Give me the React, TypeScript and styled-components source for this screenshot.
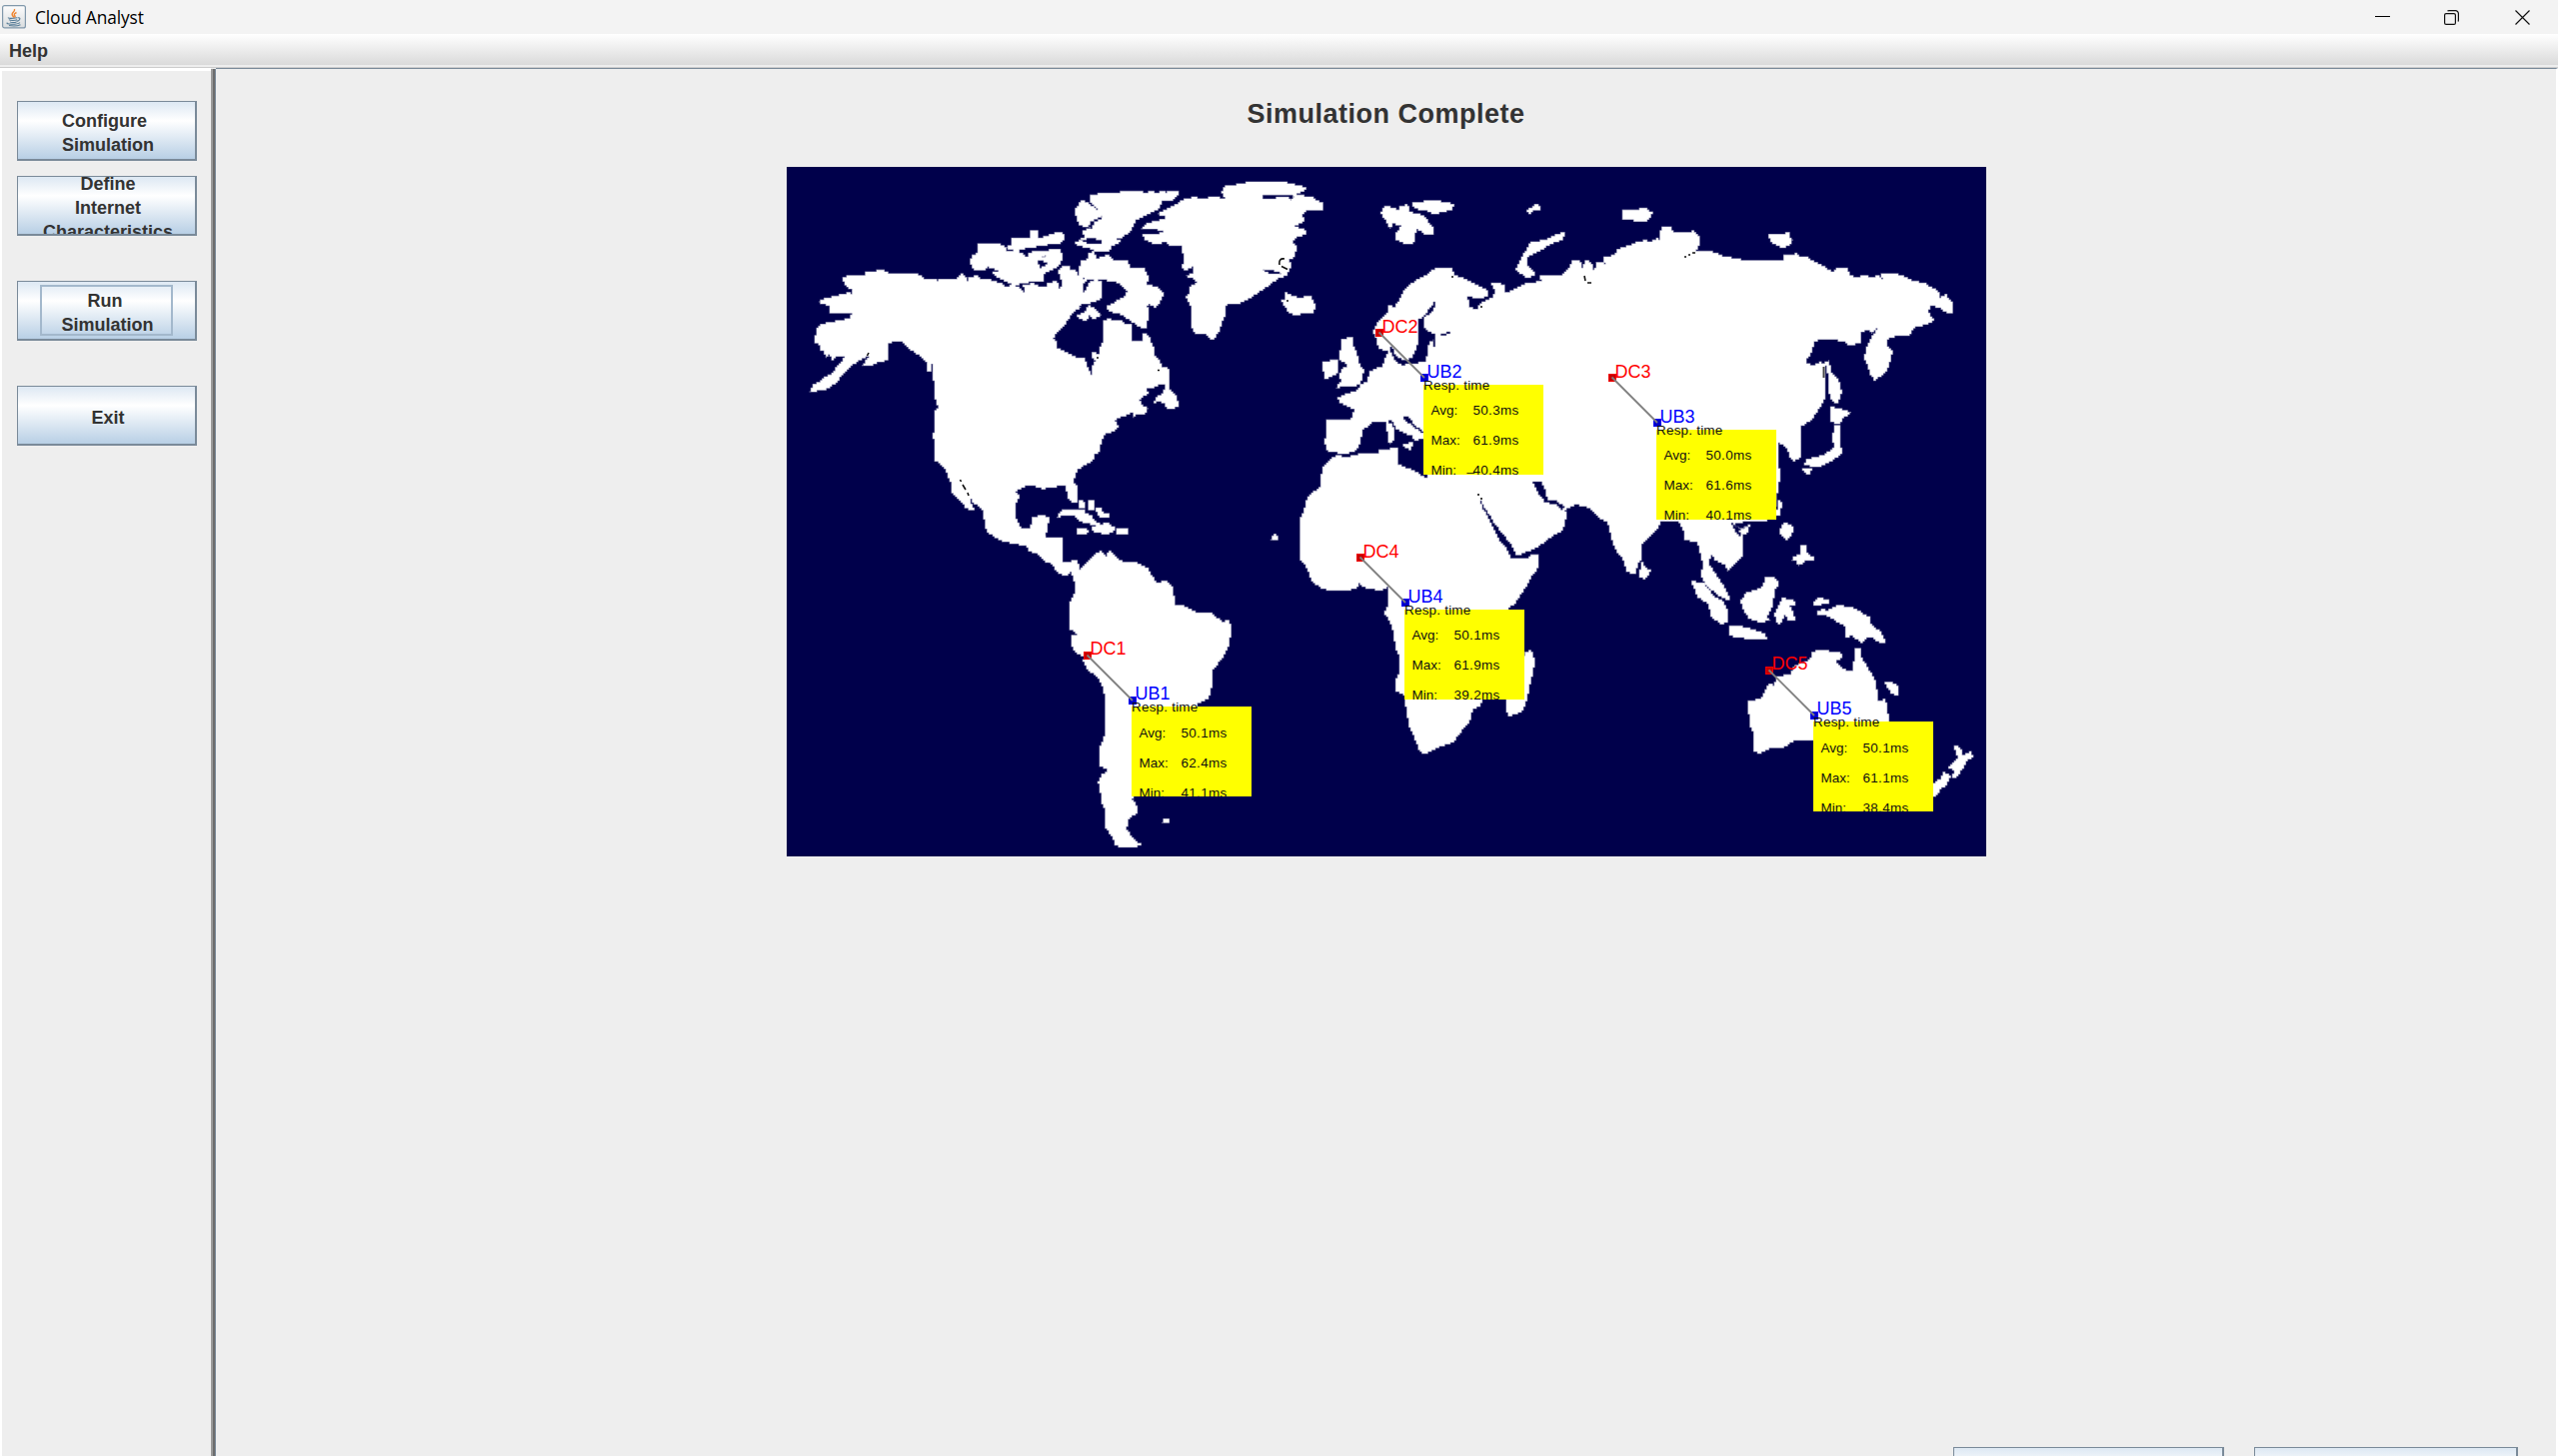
import React from "react";
import styled, { createGlobalStyle, css } from "styled-components";

const Global = createGlobalStyle`
  * { box-sizing: border-box; }
  body { margin: 0; overflow: hidden; background: #eeeeee; font-family: "Liberation Sans", Arial, sans-serif; }
`;

const Frame = styled.div`
  display: flex;
  flex-direction: column;
  width: 100vw;
  height: 100vh;
  overflow: hidden;
  background: #eeeeee;
`;

const TitleBar = styled.header`
  display: flex;
  align-items: center;
  flex: 0 0 34px;
  height: 34px;
  padding: 0 28px 0 2px;
  background: #f3f3f3;
`;

const WindowName = styled.span`
  flex: 1;
  height: 34px;
  padding-left: 9px;
  font: 17.3px/36px "Open Sans", "Noto Sans", sans-serif;
  letter-spacing: -0.08px;
  color: #000;
`;

const Controls = styled.div`
  display: flex;
  gap: 56px;
  height: 15px;
  svg { display: block; }
  svg:first-child { margin-right: -2px; }
`;

const MenuBar = styled.nav`
  flex: 0 0 34px;
  height: 34px;
  min-height: 0;
  overflow: hidden;
  padding-left: 9px;
  border-bottom: 1px solid #cccccc;
  background: linear-gradient(#ffffff, #dadada 31px, #eeeeee 31px);
`;

const MenuItem = styled.span`
  display: block;
  height: 33px;
  font-size: 18px;
  font-weight: bold;
  line-height: 34px;
  color: #333333;
`;

const Body = styled.div`
  display: flex;
  flex: 1;
  min-height: 0;
`;

const Sidebar = styled.aside`
  display: flex;
  flex-direction: column;
  flex: 0 0 211px;
  padding: 30px 0 0 15px;
  border-left: 2px solid #ffffff;
  border-top: 3px solid #ffffff;
`;

const Divider = styled.div`
  flex: 0 0 5px;
  margin-top: 1px;
  border-left: 2px solid #999999;
  background: linear-gradient(90deg, #6c6c6c 2px, #7a8a99 2px);
`;

const steel = css`
  border: solid #7a8a99;
  border-width: 1px 2px 2px 1px;
  background: linear-gradient(#dde8f3, #ffffff 33%, #b8cfe5);
`;

const SideButton = styled.button<{ $gap?: number }>`
  ${steel}
  display: flex;
  align-items: center;
  justify-content: center;
  flex: none;
  width: 180px;
  height: 60px;
  margin: 0 0 ${(p) => p.$gap ?? 0}px;
  padding: 0 0 0 2px;
  overflow: hidden;
  font: bold 18px/24px "Liberation Sans", Arial, sans-serif;
  color: #333333;
  text-align: center;
  white-space: pre;
`;

const Focus = styled.span`
  display: flex;
  align-items: center;
  justify-content: center;
  width: 133px;
  height: 51px;
  margin-right: 3px;
  padding-left: 2px;
  border: 2px solid #a3b8cc;
`;

const Caption = styled.span<{ $left?: boolean }>`
  margin-bottom: -5px;
  padding-left: 1px;
  text-align: ${(p) => (p.$left ? "left" : "center")};
`;

const Content = styled.main`
  display: flex;
  flex-direction: column;
  align-items: center;
  flex: 1;
  border-top: 1px solid #7a8a99;
  border-right: 2px solid #ffffff;
`;

const Heading = styled.h1`
  margin: 30px 0 37px;
  font-size: 27px;
  line-height: 31px;
  letter-spacing: 0.5px;
  color: #333333;
`;

const MapArea = styled.section`
  position: relative;
  width: 1200px;
  height: 690px;
  background: #00004b;
  svg { display: block; }
`;

const Actions = styled.footer`
  display: flex;
  align-self: flex-end;
  gap: 30px;
  height: 9px;
  margin: auto 38px 0 0;
  overflow: hidden;
`;

const ActionButton = styled.button<{ $w: number }>`
  ${steel}
  flex: none;
  width: ${(p) => p.$w}px;
  height: 60px;
`;

const Pin = styled.div<{ $x: number; $y: number; $c: string; $fill: string }>`
  position: absolute;
  left: ${(p) => p.$x}px;
  top: ${(p) => p.$y}px;
  width: 8px;
  height: 8px;
  border: 1px solid ${(p) => p.$c};
  background: ${(p) => p.$fill};
`;

const PinName = styled.span<{ $x: number; $y: number; $c: string }>`
  position: absolute;
  left: ${(p) => p.$x}px;
  top: ${(p) => p.$y}px;
  font-size: 18px;
  line-height: 20px;
  color: ${(p) => p.$c};
`;

const Link = styled.svg<{ $x: number; $y: number }>`
  position: absolute;
  left: ${(p) => p.$x}px;
  top: ${(p) => p.$y}px;
`;

const Card = styled.div<{ $x: number; $y: number; $drop: number }>`
  position: absolute;
  left: ${(p) => p.$x}px;
  top: ${(p) => p.$y}px;
  width: 120px;
  height: 90px;
  padding: ${(p) => 11 + p.$drop}px 0 0 8px;
  overflow: hidden;
  background: #ffff00;
  font-size: 13.5px;
  line-height: 30px;
  color: #111111;
`;

const CardTitle = styled.span<{ $x: number; $y: number }>`
  position: absolute;
  left: ${(p) => p.$x}px;
  top: ${(p) => p.$y}px;
  font-size: 13.5px;
  line-height: 16px;
  letter-spacing: 0.2px;
  color: #111111;
  white-space: nowrap;
`;

const Row = styled.div`
  display: grid;
  grid-template-columns: 42px auto;
  height: 30px;
`;

const Value = styled.span`
  position: relative;
  letter-spacing: 0.3px;
`;

const Stray = styled.span`
  position: absolute;
  left: -6px;
  top: -4px;
`;

type Site = {
  id: number;
  x: number;
  y: number;
  drop: number;
  avg: string;
  max: string;
  min: string;
  stray?: boolean;
};

const sites: Site[] = [
  { id: 1, x: 297, y: 485, drop: 1, avg: "50.1ms", max: "62.4ms", min: "41.1ms" },
  { id: 2, x: 589, y: 162, drop: 0, avg: "50.3ms", max: "61.9ms", min: "40.4ms", stray: true },
  { id: 3, x: 822, y: 207, drop: 0, avg: "50.0ms", max: "61.6ms", min: "40.1ms" },
  { id: 4, x: 570, y: 387, drop: 0, avg: "50.1ms", max: "61.9ms", min: "39.2ms" },
  { id: 5, x: 979, y: 500, drop: 1, avg: "50.1ms", max: "61.1ms", min: "38.4ms" },
];

const SiteMark = ({ s }: { s: Site }) => (
  <>
    <Pin $x={s.x} $y={s.y} $c="#f00000" $fill="#c80000" />
    <Pin $x={s.x + 45} $y={s.y + 45} $c="#0000f0" $fill="#0000c8" />
    <Card $x={s.x + 48} $y={s.y + 56 - s.drop} $drop={s.drop}>
      <Row><span>Avg:</span><Value>{s.avg}</Value></Row>
      <Row><span>Max:</span><Value>{s.max}</Value></Row>
      <Row><span>Min:</span><Value>{s.stray && <Stray>_</Stray>}{s.min}</Value></Row>
    </Card>
    <CardTitle $x={s.x + 48.5} $y={s.y + 49 - s.drop}>Resp. time</CardTitle>
    <Link $x={s.x} $y={s.y} width="54" height="54">
      <path d="M3.5 3.5L49 49" stroke="#808080" strokeWidth="1.8" />
    </Link>
    <PinName $x={s.x + 7} $y={s.y - 12 - s.drop} $c="#ff0000">DC{s.id}</PinName>
    <PinName $x={s.x + 52} $y={s.y + 33 - s.drop} $c="#0000ff">UB{s.id}</PinName>
  </>
);

const americaNorth = [
  "M188,355L205,350 250,345 258,338 282,334 292,329 308,332 325,341 410,343 420,350 432,356 466,357 470,366 474,357 500,357 520,360 532,352 545,341 556,350 560,364 568,362 568,352 590,346 600,358 625,360 640,366 672,374 676,380 700,375 705,380 722,385 728,402 735,384 730,375 742,378 760,368 772,380 800,382 804,372 830,365 835,388 842,388 847,368 845,345 838,330 846,320 866,320 868,330 885,332 895,345 905,352 922,362 912,372 912,396 922,385 928,368 945,358 968,362 966,415 945,424 920,432 895,436 905,445 888,456 872,470 865,485 852,500 830,520 820,540 830,548 832,567 850,572 870,585 890,592 918,594 922,625 930,645 937,645 940,615 950,602 962,585 960,560 970,540 970,485 985,478 1005,485 1020,482 1032,495 1055,495 1055,543 1090,543 1092,520 1108,530 1115,550 1125,570 1123,590 1138,605 1145,625 1160,625 1168,635 1170,690 1185,705 1190,720 1194,742 1175,745 1160,740 1155,728 1140,725 1125,732 1130,715 1150,695 1160,672 1145,672 1120,682 1098,685 1105,700 1085,712 1080,725 1090,740 1108,748 1095,762 1075,765 1062,775 1060,757 1035,768 1015,772 1005,788 1018,802 1005,815 985,820 970,830 968,850 958,858 960,875 942,885 945,900 935,910 915,918 895,935 885,945 880,970 892,985 892,1030 880,1028 862,1012 858,980 805,982 800,990 780,985 765,978 740,980 715,992 708,1000 716,1010 708,1035 708,1080 722,1105 752,1105 760,1075 785,1070 808,1072 802,1105 795,1135 840,1136 848,1145 848,1210 810,1210 800,1200 775,1182 750,1175 740,1155 700,1150 665,1138 630,1120 618,1100 612,1052 600,1040 580,1022 572,1012 575,1035 582,1048 560,1045 545,1025 518,995 515,965 505,950 500,925 485,908 468,897 465,850 460,820 466,810 466,750 474,742 466,705 466,660 460,655 460,612 455,610 452,632 443,632 443,605 425,590 390,565 368,545 345,544 322,552 326,598 300,608 275,620 248,620 268,590 240,600 215,625 185,650 175,668 140,690 88,694 100,675 120,665 135,650 155,640 180,610 198,590 175,590 160,598 148,585 138,592 132,572 122,570 122,555 108,545 110,505 120,495 150,490 175,485 205,475 216,460 190,462 152,462 150,440 135,432 115,424 135,412 165,408 205,397 216,406 218,394 234,394 210,385 195,370Z",
  "M570,300L580,285 595,280 595,252 655,252 672,262 680,272 712,275 732,285 740,298 745,280 765,272 842,270 848,300 838,320 820,330 800,335 790,345 790,362 765,362 735,370 708,374 680,365 650,350 642,335 660,332 640,322 630,318 615,328 583,328 575,310Z",
  "M680,262L698,250 698,234 740,236 752,232 752,210 775,210 775,232 800,228 830,216 848,220 852,240 845,250 815,252 790,255 745,265 715,275 700,268Z",
  "M932,105L965,98 1020,97 1020,93 1085,93 1088,99 1110,95 1130,97 1145,94 1165,99 1165,93 1195,95 1198,105 1180,120 1145,125 1140,145 1115,160 1095,170 1065,185 1055,210 1030,235 1005,235 1022,245 1000,260 990,272 955,272 930,265 895,258 885,245 900,238 915,228 912,215 925,205 945,208 935,200 897,195 895,170 885,160 885,145 905,125 922,128 948,150 954,150 948,140 932,122Z",
  "M900,345L898,325 905,305 925,295 928,278 940,275 950,295 985,288 1000,300 1040,305 1050,322 1090,325 1108,355 1100,375 1130,382 1150,405 1142,430 1130,442 1115,430 1100,435 1108,460 1103,505 1090,503 1055,480 1025,462 990,455 982,440 1005,425 1032,410 1042,390 1030,375 1010,365 965,358 930,358 912,355Z",
  "M895,465L915,455 925,440 945,448 955,460 965,468 945,475 935,468 920,483 905,475Z",
  "M940,580L958,585 952,602 938,592Z",
  "M832,1075L835,1062 848,1050 908,1050 915,1060 935,1070 945,1085 960,1098 970,1088 985,1090 1005,1108 1000,1116 975,1122 940,1115 938,1100 948,1096 925,1092 905,1085 885,1070 850,1068 842,1075Z",
  "M892,1104L920,1104 920,1110 926,1110 926,1118 918,1124 892,1124Z",
  "M1012,1104L1043,1104 1043,1124 1012,1124Z",
  "M897,1025L903,1025 915,1035 915,1046 897,1046Z",
  "M928,1025L946,1025 946,1048 932,1048 928,1042Z",
  "M950,1043L965,1043 965,1057 971,1063 988,1063 988,1074 970,1074 956,1067Z",
];

const atlantic = [
  "M242,205L262,190 285,182 310,178 315,165 295,160 310,150 340,140 365,122 400,112 425,117 460,110 498,114 488,95 490,82 500,77 553,73 558,68 680,68 682,73 725,75 738,90 725,102 705,106 755,112 765,120 790,130 788,148 745,150 730,165 735,182 725,190 708,200 740,215 738,225 705,232 702,252 710,262 705,290 688,300 692,320 685,345 660,352 635,378 600,400 555,425 535,430 510,430 500,445 498,470 485,490 480,515 468,525 462,538 450,538 448,526 440,520 410,520 397,500 395,440 385,420 378,410 390,400 390,382 412,365 400,355 380,345 402,335 402,320 385,330 370,325 376,295 368,260 330,255 325,248 290,250 262,242 252,225 290,222 312,215 285,208Z",
  "M665,422L678,418 680,400 700,408 725,412 732,408 752,408 765,435 760,460 735,460 715,468 690,458 678,440Z",
  "M790,605L810,605 810,598 835,600 835,640 820,650 795,654Z",
  "M845,540L860,538 862,533 882,535 878,560 890,580 898,605 900,625 915,635 908,650 905,672 880,678 850,680 828,682 832,672 848,665 838,645 845,630 862,620 860,605 838,600 838,570 848,562Z",
  "M632,1138L645,1124 655,1132 655,1140Z",
];

const oldWorld = [
  "M140,810L138,775 143,772 143,722 175,718 215,718 222,700 225,688 205,678 178,662 176,652 205,640 235,628 245,612 262,600 272,575 295,565 318,558 312,550 318,540 325,512 298,505 292,480 290,470 284,450 292,430 325,395 325,380 342,385 355,365 370,335 385,320 410,300 430,292 465,265 515,264 525,285 545,295 575,310 600,322 625,330 625,350 605,352 562,350 568,385 590,390 605,370 640,348 645,325 638,312 650,308 675,315 678,340 700,330 735,308 795,304 780,294 780,285 800,288 845,285 865,265 880,242 902,242 905,262 918,245 932,248 938,268 945,268 950,250 968,248 995,262 972,240 975,230 1005,228 1012,210 1045,195 1060,190 1100,178 1110,185 1130,172 1140,182 1145,153 1150,142 1172,142 1178,155 1185,159 1230,159 1240,155 1252,168 1262,180 1260,198 1250,214 1290,214 1325,228 1330,233 1380,237 1388,245 1515,245 1515,228 1540,228 1545,222 1560,232 1580,230 1590,242 1610,250 1640,262 1660,275 1670,264 1700,266 1710,285 1725,294 1750,290 1780,294 1795,290 1810,305 1808,283 1845,283 1870,288 1895,305 1935,308 1960,325 1975,332 1980,355 1995,345 2008,358 2020,365 2020,397 1990,395 1985,382 1960,378 1945,395 1955,410 1965,425 1940,435 1900,442 1888,470 1860,468 1835,472 1825,485 1822,500 1838,517 1830,560 1818,580 1788,605 1775,580 1765,555 1755,535 1762,500 1780,470 1795,445 1780,462 1775,448 1760,452 1742,462 1745,488 1710,493 1700,485 1680,485 1675,480 1620,480 1605,490 1600,518 1580,540 1582,550 1600,555 1620,545 1638,560 1638,660 1620,688 1600,722 1565,742 1562,832 1550,842 1530,830 1525,803 1495,780 1495,860 1503,885 1498,935 1490,945 1485,1018 1440,1022 1400,1022 1385,1028 1355,1035 1370,1050 1390,1065 1390,1130 1365,1155 1345,1175 1338,1155 1310,1145 1295,1120 1288,1160 1305,1180 1330,1215 1348,1258 1325,1250 1285,1215 1268,1190 1272,1150 1255,1085 1218,1080 1215,1055 1200,1025 1150,1025 1130,1055 1110,1075 1087,1095 1085,1140 1075,1155 1070,1180 1040,1178 1035,1145 1010,1105 995,1070 985,1025 965,1015 935,985 895,975 855,990 862,1010 850,1050 820,1070 780,1100 750,1112 720,1125 708,1122 690,1085 650,1030 620,985 605,955 600,880 432,870 432,755 405,730 390,708 375,705 372,720 400,745 432,765 432,778 408,785 400,768 375,760 350,745 340,718 322,725 295,725 280,725 250,755 240,795 225,815 200,820 165,815Z",
  "M170,830L200,832 225,825 245,820 300,820 300,810 352,806 355,855 400,875 435,895 445,890 445,880 602,880 602,960 608,990 625,1015 640,1050 660,1085 680,1110 695,1135 745,1135 755,1127 772,1127 778,1135 775,1165 760,1190 740,1225 705,1275 685,1285 685,1400 608,1560 600,1580 580,1588 570,1630 550,1650 525,1690 490,1700 440,1722 420,1718 405,1670 388,1630 380,1560 375,1550 350,1528 348,1500 358,1475 360,1430 350,1405 345,1355 330,1325 318,1300 328,1270 326,1222 305,1233 250,1223 240,1205 230,1225 200,1232 160,1235 130,1225 98,1200 85,1165 70,1145 60,1135 60,1015 75,990 85,952 122,915 125,895 132,860 155,840Z",
  "M735,1416L755,1412 757,1435 765,1445 760,1480 748,1530 738,1580 725,1600 695,1608 680,1590 680,1540Z",
  "M708,265L735,215 755,188 800,180 830,165 858,160 852,180 815,190 780,215 742,230 745,260 765,280 765,290 745,292 715,272Z",
  "M305,95L315,78 345,85 355,95 360,78 385,76 390,98 430,110 460,145 462,162 440,162 412,140 403,180 400,190 380,190 350,175 350,160 365,138 345,130 330,145 322,120 308,108Z",
  "M402,68L425,68 435,62 470,65 525,75 520,90 470,103 440,92 405,82Z",
  "M742,88L765,75 780,78 785,88 765,92 752,103Z",
  "M1032,92L1050,88 1098,86 1118,104 1105,122 1032,116Z",
  "M1470,165L1505,165 1528,158 1530,175 1542,180 1530,195 1515,203 1475,188Z",
  "M1635,548L1650,540 1652,580 1675,605 1690,640 1680,650 1675,672 1662,665 1650,630 1650,590Z",
  "M1655,680L1675,685 1695,695 1715,700 1695,715 1685,730 1655,728Z",
  "M1665,735L1682,740 1685,800 1690,820 1660,845 1620,862 1578,858 1580,840 1630,825 1663,800 1662,770Z",
  "M1572,865L1598,866 1595,885 1580,880Z",
  "M1495,963L1510,968 1505,1005 1490,1005Z",
  "M322,728L338,735 345,755 345,780 335,792 325,780Z",
  "M372,795L400,788 392,810Z",
];

const southEast = [
  "M470,395L510,378 505,390 500,405 480,400Z",
  "M600,385L615,372 638,378 642,398 622,422 600,400Z",
  "M662,435L680,435 682,460 705,475 705,483 680,485 660,500 655,483 637,484 640,470 662,462Z",
  "M185,490L200,502 212,518 195,540 180,528Z",
  "M338,542L360,548 372,550 400,590 430,605 445,640 447,668 430,675 395,645 390,610 355,590Z",
  "M450,680L475,680 500,685 550,700 562,720 510,720 450,705Z",
  "M485,600L500,580 530,570 550,555 555,535 580,533 598,548 598,562 588,575 582,620 565,655 573,665 545,670 510,655 490,625Z",
  "M588,640L600,610 610,595 650,608 650,615 628,618 645,662 628,660 618,645 605,675 592,665Z",
  "M702,605L715,593 748,600 748,613 705,617Z",
  "M712,635L725,628 745,632 770,618 815,622 870,658 875,675 905,700 920,732 905,732 885,712 868,712 850,728 820,710 800,715 798,680 770,660 745,645 715,647Z",
  "M508,905L545,900 555,870 570,852 585,860 590,830 630,828 645,800 695,780 698,758 715,755 780,760 787,772 768,785 775,798 800,815 820,812 825,745 842,745 845,775 870,820 890,850 897,905 918,900 930,965 930,1020 705,1022 650,1025 615,1042 575,1045 545,1062 522,1050 525,1000 515,980Z",
  "M915,850L930,846 955,860 958,885 940,880Z",
  "M1128,1040L1143,1045 1148,1065 1168,1058 1182,1072 1165,1085 1150,1110 1130,1133 1122,1130 1125,1110 1108,1100 1135,1075Z",
  "M1055,1155L1085,1135 1090,1120 1112,1130 1105,1155 1085,1170 1070,1190 1055,1190Z",
];

const americaSouth = [
  "M100,85L135,115 180,116 188,125 188,190 200,188 225,182 235,190 238,208 265,180 285,168 298,152 318,172 330,155 345,170 370,190 405,187 440,205 450,230 470,250 500,245 522,265 528,315 550,318 590,340 635,340 665,368 678,360 688,365 695,395 690,435 665,480 640,515 640,560 628,600 600,612 400,890 398,905 412,925 412,940 392,955 378,990 400,1020 422,1035 410,1042 370,1042 345,1030 340,1010 320,980 318,930 308,900 300,850 295,845 308,825 320,822 322,805 298,798 302,745 320,700 318,660 320,590 308,550 290,525 265,510 250,480 262,470 240,465 222,445 215,430 215,408 238,402 225,395 208,385 212,360 208,305 225,280 230,250 218,218 205,230 180,220 150,180 125,160 100,155Z",
  "M484,968L492,958 508,960 508,970Z",
];

const inletsWest = [
  "M775,300L802,308 800,320 778,326Z",
  "M785,290L798,283 798,292Z",
  "M905,240L930,234 968,243 965,250 935,250Z",
  "M928,198L935,182 968,168 968,178 945,186 940,208Z",
];

const inletsGreenland = [
  "M612,108L640,106 690,105 708,112 695,120 690,113 612,114Z",
  "M612,333L630,330 665,340 640,344Z",
];

const inletsOld = [
  "M468,366L440,405 417,420 417,490 402,535 385,542 360,535 345,520 340,495 335,515 345,540 365,557 385,550 437,545 445,500 448,482 460,480 462,502 470,502 470,460 440,450 432,435 435,412 450,400 470,375Z",
  "M762,908L780,905 795,925 805,960 830,962 858,982 848,992 835,972 800,970 785,945Z",
  "M484,464L512,458 512,464 490,470Z",
  "M1355,1032L1380,1045 1405,1040 1380,1055 1385,1068 1370,1052Z",
];

/* Coastlines follow the cells of a 640-column raster stretched over the panel. */
const CELL = 1.875;

const toCells = (shapes: string[], ox: number, oy: number) =>
  shapes
    .map((d) => {
      const pts = (d.match(/\d+,\d+/g) ?? []).map((pair) => {
        const [x, y] = pair.split(",").map(Number);
        return [Math.round((ox + x / 3 - 787) / CELL), Math.round((oy + y / 3 - 167) / CELL)];
      });
      let [cx, cy] = pts[0];
      let out = `M${cx * CELL},${cy * CELL}`;
      [...pts.slice(1), pts[0]].forEach(([tx, ty]) => {
        const dx = tx - cx;
        const dy = ty - cy;
        const n = Math.max(Math.abs(dx), Math.abs(dy));
        const sx = cx;
        const sy = cy;
        for (let i = 1; i <= n; i++) {
          const nx = sx + Math.round((dx * i) / n);
          const ny = sy + Math.round((dy * i) / n);
          if (nx !== cx) out += `H${nx * CELL}`;
          if (ny !== cy) out += `V${ny * CELL}`;
          cx = nx;
          cy = ny;
        }
      });
      return out + "Z";
    })
    .join("");

const land = [
  toCells(americaNorth, 780, 160),
  toCells(atlantic, 1060, 160),
  toCells(oldWorld, 1280, 180),
  toCells(southEast, 1580, 400),
  toCells(americaSouth, 1000, 500),
];

const water = [
  toCells(inletsWest, 780, 160),
  toCells(inletsGreenland, 1060, 160),
  toCells(inletsOld, 1280, 180),
];

const WorldMap = () => (
  <svg width="1200" height="690" viewBox="0 0 1200 690">
    <g fill="none" stroke="#8080a5" strokeWidth="1.2">
      {land.map((d, i) => <path key={i} d={d} />)}
    </g>
    <g fill="#ffffff">
      {land.map((d, i) => <path key={i} d={d} />)}
    </g>
    <g fill="#00004b" stroke="#8080a5" strokeWidth=".5">
      {water.map((d, i) => <path key={i} d={d} />)}
    </g>
    <g transform="translate(-787 -167)" fill="none" stroke="#111111" strokeWidth="1.6">
      <path d="M960.500 480l1 2M963 485l3 5M968 493l1 3M869 353l-1.500 3M1158 370.500h2M1097 358h2M1285 259q-6-1-5 6M1282 266.500l6 3M1454 277h-2M1585 276l1 5M1588 283h4M1685 257h2M1689 255h2M1693 253h3M1479 494v2M1482 498v2M1481 307h2M1287 301h2" />
      <path d="M1824.500 367v11" stroke="#444444" strokeWidth="2" />
    </g>
  </svg>
);

const JavaIcon = () => (
  <svg width="24" height="24" viewBox="0 0 24 24" fill="none">
    <defs>
      <linearGradient id="tile" x1="0" y1="0" x2="0" y2="1">
        <stop stopColor="#fdfdfd" />
        <stop offset="1" stopColor="#d9dcde" />
      </linearGradient>
    </defs>
    <rect x=".6" y=".6" width="22.800" height="22.300" rx="2" fill="url(#tile)" stroke="#8198ab" strokeWidth="1.200" />
    <path d="M12.500 4c1 3-4 4-2 6.500l1.500 2M14.500 7.500c-3 1.500-2.500 2.500-1.500 3.500.5.700-.5 1.500-.5 1.500" stroke="#ef8632" strokeWidth="1.400" />
    <path d="M6.500 12.500c-1 1 3 1.200 8.500.3M7 14.600c1 1.100 6 1.100 8.200.2M8 16.800c1 .9 4.500.9 6.500.1M15.500 12.800c4-.5 2.500 3-.8 3.600M5.500 17.800c-3 1.700 9 2.400 12.500-.2M7 20.500c4 .7 9 .3 11.500-.8" stroke="#547a96" strokeWidth="1.100" />
  </svg>
);

export default function App() {
  return (
    <Frame>
      <Global />
      <TitleBar>
        <JavaIcon />
        <WindowName>Cloud Analyst</WindowName>
        <Controls>
          <svg width="15" height="15"><path d="M0 6.500h15" stroke="#000" /></svg>
          <svg width="15" height="15" fill="none" stroke="#111" strokeWidth="1.200">
            <rect x=".6" y="3.600" width="10.800" height="10.800" rx="1.500" />
            <path d="M3.500 1.100q.5-.5 1.500-.5h6.400a3 3 0 0 1 3 3V10q0 1-.5 1.500" />
          </svg>
          <svg width="15" height="15"><path d="M.5.500l14 14M14.500.500l-14 14" stroke="#111" strokeWidth="1.200" /></svg>
        </Controls>
      </TitleBar>
      <MenuBar><MenuItem>Help</MenuItem></MenuBar>
      <Body>
        <Sidebar>
          <SideButton $gap={15}><Caption $left>{"Configure\nSimulation"}</Caption></SideButton>
          <SideButton $gap={45}><Caption>{"Define\nInternet\nCharacteristics"}</Caption></SideButton>
          <SideButton $gap={45}><Focus><Caption>{"Run\u00a0\nSimulation"}</Caption></Focus></SideButton>
          <SideButton><Caption>Exit</Caption></SideButton>
        </Sidebar>
        <Divider />
        <Content>
          <Heading>Simulation Complete</Heading>
          <MapArea>
            <WorldMap />
            {sites.map((s) => <SiteMark key={s.id} s={s} />)}
          </MapArea>
          <Actions>
            <ActionButton $w={271} />
            <ActionButton $w={264} />
          </Actions>
        </Content>
      </Body>
    </Frame>
  );
}
